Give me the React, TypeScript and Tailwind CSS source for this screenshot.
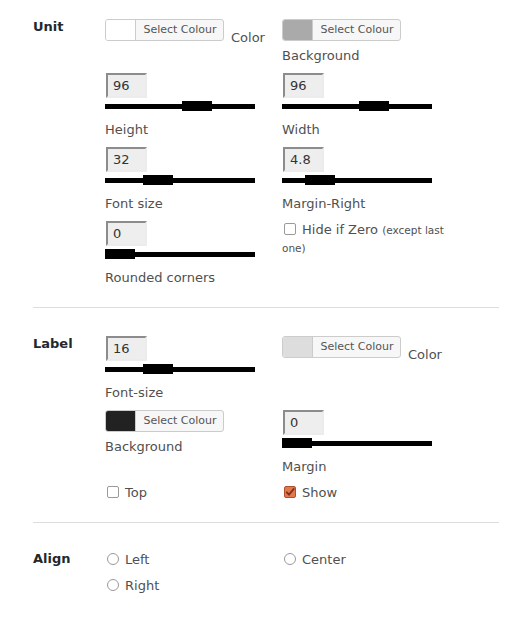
import React from "react";

const FONT = { fontFamily: '"DejaVu Sans", Verdana, sans-serif' };

function ColourButton({ swatch }: { swatch: string }) {
  return (
    <div className="flex h-[22px] w-[119px] shrink-0 overflow-hidden rounded-[3px] border border-[#cccccc] bg-[#f7f7f7]">
      <div className="h-full w-[30px] border-r border-[#cccccc]" style={{ backgroundColor: swatch }} />
      <div className="flex flex-1 items-center justify-center pl-px text-[11px] leading-[20px] text-[#555555]">Select Colour</div>
    </div>
  );
}

function ColourCell({ swatch, label, inline }: { swatch: string; label: string; inline?: boolean }) {
  if (inline) {
    return (
      <div className="flex items-start">
        <ColourButton swatch={swatch} />
        <span className="ml-[7px] mt-[10px]">{label}</span>
      </div>
    );
  }
  return (
    <div className="flex flex-col items-start">
      <ColourButton swatch={swatch} />
      <span className="mt-[6px]">{label}</span>
    </div>
  );
}

function SliderCell({ value, offset, label }: { value: string; offset: number; label: string }) {
  return (
    <div className="flex flex-col items-start">
      <div className="ml-px flex h-[25px] w-[41px] items-center border-2 border-b-[#ececec] border-l-[#8c8c8c] border-r-[#ececec] border-t-[#8c8c8c] bg-[#eeeeee] pl-[5px] text-[#333333]">
        {value}
      </div>
      <div className="relative mt-[3px] h-[10px] w-[150px]">
        <div className="absolute left-0 right-0 top-[3px] h-[5px] bg-black" />
        <div className="absolute top-0 h-[10px] w-[30px] bg-black" style={{ left: offset }} />
      </div>
      <span className="mt-[10px]">{label}</span>
    </div>
  );
}

function Box({ checked }: { checked?: boolean }) {
  if (checked) {
    return (
      <span className="relative mr-[6px] ml-[2px] inline-block h-[12px] w-[12px] rounded-[2px] border border-[#b0502c] bg-[#e2794e] align-[-1px]">
        <svg viewBox="0 0 12 12" className="absolute -left-px -top-px h-[12px] w-[12px]">
          <path d="M2.3 5.8 L5 8.6 L10.2 2.4" fill="none" stroke="#7e3118" strokeWidth="1.8" />
        </svg>
      </span>
    );
  }
  return (
    <span className="mr-[6px] ml-[2px] inline-block h-[12px] w-[12px] rounded-[2px] border border-[#9a9a9a] bg-white align-[-1px]" />
  );
}

function Radio() {
  return <span className="mr-[6px] ml-[2px] inline-block h-[12px] w-[12px] rounded-full border border-[#9a9a9a] bg-white align-[-1px]" />;
}

function CheckCell({ label, checked }: { label: string; checked?: boolean }) {
  return (
    <div className="h-[18px] whitespace-nowrap">
      <Box checked={checked} />
      {label}
    </div>
  );
}

function RadioCell({ label }: { label: string }) {
  return (
    <div className="h-[18px] whitespace-nowrap">
      <Radio />
      {label}
    </div>
  );
}

function Section({ title, children, pad, gap }: { title: string; children: React.ReactNode; pad: string; gap: string }) {
  return (
    <div className={`flex ${pad}`}>
      <div className="-mt-px w-[72px] shrink-0 font-bold text-[#23282d]">{title}</div>
      <div className={`grid grid-cols-[177px_217px] ${gap}`}>{children}</div>
    </div>
  );
}

export default function App() {
  return (
    <div className="min-h-[622px] w-[508px] bg-white pl-[33px] pr-[9px] text-[13px] leading-[18px] text-[#505050]" style={FONT}>
      <Section title="Unit" pad="pt-[19px] pb-[20px]" gap="gap-y-[8px]">
        <ColourCell swatch="#ffffff" label="Color" inline />
        <ColourCell swatch="#aaaaaa" label="Background" />
        <SliderCell value="96" offset={77} label="Height" />
        <SliderCell value="96" offset={77} label="Width" />
        <SliderCell value="32" offset={38} label="Font size" />
        <SliderCell value="4.8" offset={23} label="Margin-Right" />
        <SliderCell value="0" offset={0} label="Rounded corners" />
        <div>
          <span className="whitespace-nowrap">
            <Box />
            Hide if Zero <small className="text-[10.5px]">(except last</small>
          </span>
          <br />
          <small className="text-[10.5px]">one)</small>
        </div>
      </Section>
      <div className="h-px bg-[#dddddd]" />
      <Section title="Label" pad="pt-[28px] pb-[20px]" gap="gap-y-[8px]">
        <SliderCell value="16" offset={38} label="Font-size" />
        <ColourCell swatch="#dddddd" label="Color" inline />
        <ColourCell swatch="#222222" label="Background" />
        <SliderCell value="0" offset={0} label="Margin" />
        <CheckCell label="Top" />
        <CheckCell label="Show" checked />
      </Section>
      <div className="h-px bg-[#dddddd]" />
      <Section title="Align" pad="pt-[28px] pb-[20px]" gap="gap-y-[8px]">
        <RadioCell label="Left" />
        <RadioCell label="Center" />
        <RadioCell label="Right" />
      </Section>
    </div>
  );
}
